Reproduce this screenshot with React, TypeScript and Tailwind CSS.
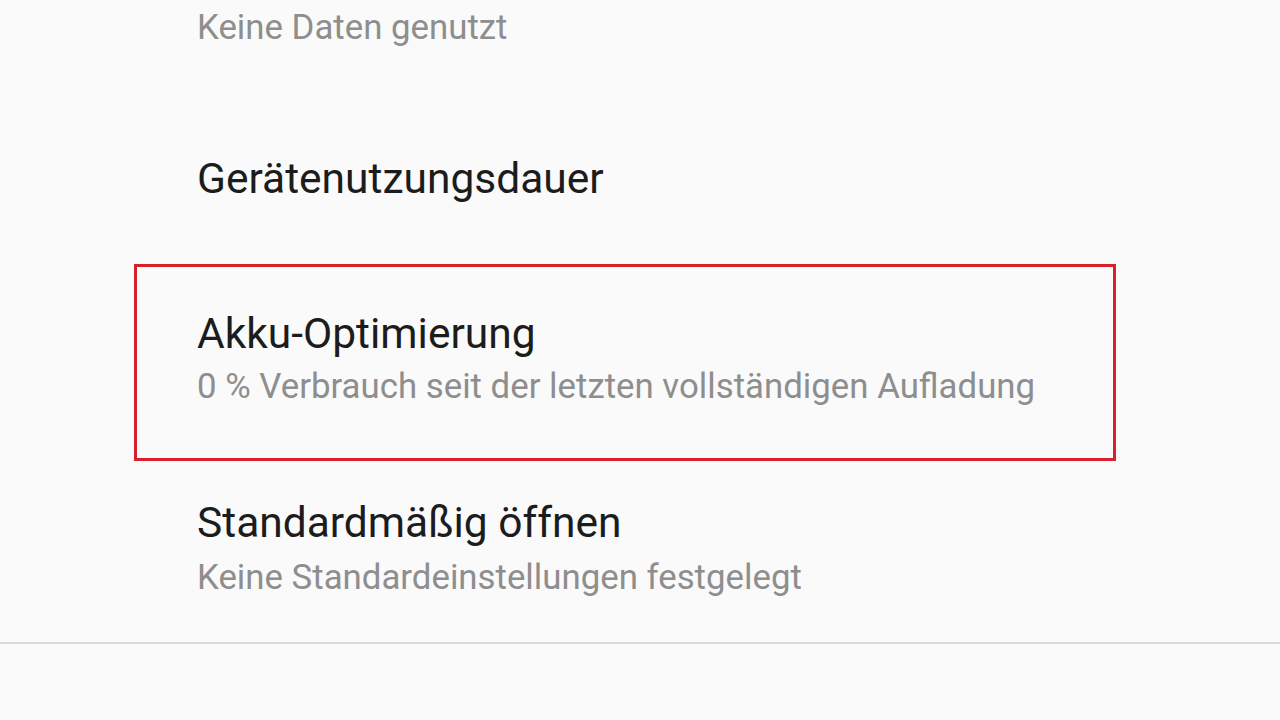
import React from 'react';

const App: React.FC = () => {
  return (
    <div className="h-[720px] w-[1280px] overflow-hidden bg-[#fafafa] font-['Roboto',sans-serif] flex flex-col">
      {/* Previous entry, cut off at the top */}
      <div className="pl-[197px] pt-[7px] text-[34.8px] leading-[40px] text-[#8e8e8e]">Keine Daten genutzt</div>

      {/* Screen time */}
      <div className="pl-[197px] mt-[108px] text-[42.5px] leading-[48px] text-[#1c1c1c]">Gerätenutzungsdauer</div>

      {/* Highlighted battery row */}
      <div className="ml-[134px] mt-[61px] w-[982px] h-[197px] border-[3px] border-[#d6202c] pl-[60px] pt-[43px] flex flex-col">
        <div className="text-[42.5px] leading-[48px] text-[#1c1c1c]">Akku-Optimierung</div>
        <div className="mt-[8px] text-[34.8px] leading-[40px] text-[#8e8e8e]">0 % Verbrauch seit der letzten vollständigen Aufladung</div>
      </div>

      {/* Open by default */}
      <div className="pl-[197px] pt-[38px] flex flex-col">
        <div className="text-[42.5px] leading-[48px] text-[#1c1c1c]">Standardmäßig öffnen</div>
        <div className="mt-[10px] text-[34.8px] leading-[40px] text-[#8e8e8e]">Keine Standardeinstellungen festgelegt</div>
      </div>

      <div className="mt-[45px] h-[2px] bg-[#dadada]" />
    </div>
  );
};

export default App;
